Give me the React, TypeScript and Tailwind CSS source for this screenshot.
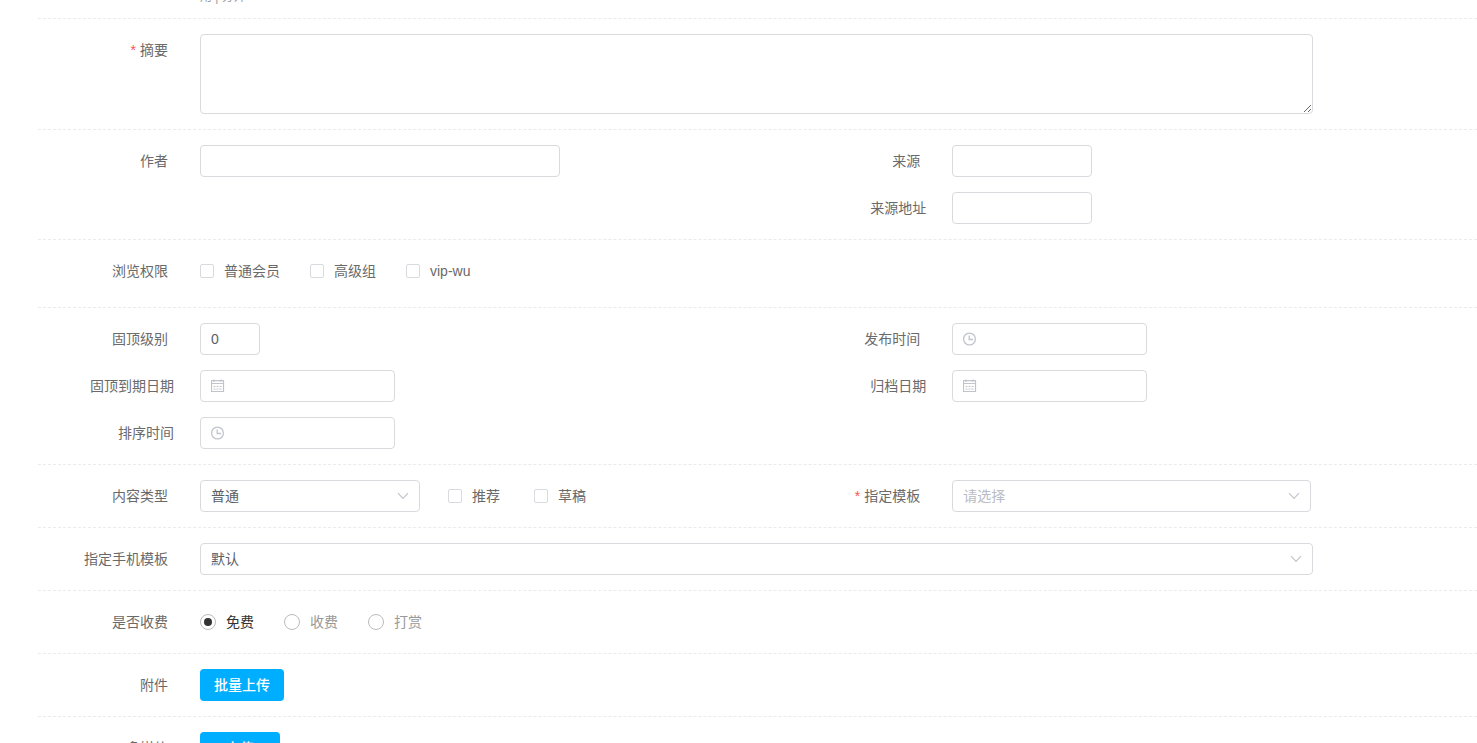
import type { ReactNode } from 'react'

const inputClass = 'block h-8 rounded border border-[#d9dadd] bg-white px-2.5 text-sm text-[#5a5e66] outline-none focus:border-[#00aeff]'

const ClockIcon = () => (
    <svg viewBox="0 0 14 14" className="size-3.5" fill="none" stroke="#c0c4cc" strokeWidth="1.3">
        <circle cx="6.5" cy="7" r="5.9" />
        <path d="M6.2 3.4v4.1h3.8" />
    </svg>
)

const CalendarIcon = () => (
    <svg viewBox="0 0 14 14" className="size-3.5" fill="none" stroke="#c0c4cc">
        <path d="M.5 1.7h12v10.8H.5zM.5 4.5h12M3 .5v2.4M10 .5v2.4" strokeWidth="1.2" />
        <path d="M2.5 7.5h8M2.5 10h8" strokeDasharray="2 1" />
    </svg>
)

const ArrowIcon = () => (
    <svg viewBox="0 0 12 8" className="pointer-events-none absolute top-3 right-[11px] h-2 w-3" fill="none" stroke="#c0c4cc" strokeWidth="1.1">
        <path d="M1 1.2 6 6.4 11 1.2" />
    </svg>
)

const Row = ({ children, className = 'pb-[15px]' }: { children: ReactNode; className?: string }) => (
    <div className={`border-b border-dashed border-[#ebebeb] pt-[15px] ${className}`}>{children}</div>
)

const Columns = ({ children }: { children: ReactNode }) => (
    <div className="grid grid-cols-[23fr_21fr] items-start">{children}</div>
)

type FieldProps = { id?: string; label: string; required?: boolean; sub?: boolean; children: ReactNode }

const Field = ({ id, label, required, sub, children }: FieldProps) => (
    <div className="flex items-start">
        <label htmlFor={id} className={`w-[162px] shrink-0 text-right leading-8 ${sub ? 'pr-[26px]' : 'pr-8'}`}>
            {required && <span className="mr-1 text-[#fa5555]">*</span>}
            {label}
        </label>
        {children}
    </div>
)

const DateInput = ({ id, icon }: { id: string; icon: ReactNode }) => (
    <div className="relative w-[195px]">
        <input id={id} type="text" className={`${inputClass} w-full pl-8`} />
        <span className="pointer-events-none absolute top-[9px] left-[11px]">{icon}</span>
    </div>
)

const Select = ({ id, value, className, placeholder }: { id: string; value: string; className: string; placeholder?: boolean }) => (
    <div className={`relative ${className}`}>
        <select id={id} className={`${inputClass} w-full appearance-none ${placeholder ? 'text-[#b8bcc4]' : ''}`}>
            <option>{value}</option>
        </select>
        <ArrowIcon />
    </div>
)

const Checkbox = ({ label }: { label: string }) => (
    <label className="flex h-8 items-center gap-2.5">
        <input type="checkbox" className="size-3.5 appearance-none rounded-xs border border-[#d9dadd] bg-white checked:bg-[#00aeff]" />
        {label}
    </label>
)

const Radio = ({ label, checked }: { label: string; checked?: boolean }) => (
    <label className="flex h-8 items-center gap-2.5 text-[#999] has-checked:text-[#333]">
        <input
            type="radio"
            name="charge"
            defaultChecked={checked}
            className="grid size-4 appearance-none place-items-center rounded-full border border-[#bbb] bg-white before:size-2 before:rounded-full checked:before:bg-[#333]"
        />
        {label}
    </label>
)

const App = () => {
    return (
        <main className="h-screen overflow-hidden bg-white pl-[38px] font-['Liberation_Sans','Noto_Sans_CJK_SC',sans-serif] text-sm text-[#6a6a6a]">
            <form className="-mt-6">
                <Row>
                    <p className="pl-[162px] text-xs leading-none text-[#999]">用 | 分开</p>
                </Row>

                <Row>
                    <Field id="summary" label="摘要" required>
                        <textarea id="summary" className="mr-41 block h-20 min-w-0 flex-1 resize-y rounded border border-[#d9dadd] px-2.5 py-1.5 outline-none" />
                    </Field>
                </Row>

                <Row>
                    <Columns>
                        <Field id="author" label="作者">
                            <input id="author" type="text" className={`${inputClass} w-[360px]`} />
                        </Field>
                        <div className="flex flex-col gap-[15px]">
                            <Field id="source" label="来源">
                                <input id="source" type="text" className={`${inputClass} w-[140px]`} />
                            </Field>
                            <Field id="source-url" label="来源地址" sub>
                                <input id="source-url" type="text" className={`${inputClass} w-[140px]`} />
                            </Field>
                        </div>
                    </Columns>
                </Row>

                <Row className="pb-5">
                    <Field label="浏览权限">
                        <div className="flex gap-[30px]">
                            <Checkbox label="普通会员" />
                            <Checkbox label="高级组" />
                            <Checkbox label="vip-wu" />
                        </div>
                    </Field>
                </Row>

                <Row>
                    <Columns>
                        <div className="flex flex-col gap-[15px]">
                            <Field id="top-level" label="固顶级别">
                                <input id="top-level" type="text" defaultValue="0" className={`${inputClass} w-[60px]`} />
                            </Field>
                            <Field id="top-expire" label="固顶到期日期" sub>
                                <DateInput id="top-expire" icon={<CalendarIcon />} />
                            </Field>
                            <Field id="sort-time" label="排序时间" sub>
                                <DateInput id="sort-time" icon={<ClockIcon />} />
                            </Field>
                        </div>
                        <div className="flex flex-col gap-[15px]">
                            <Field id="publish-time" label="发布时间">
                                <DateInput id="publish-time" icon={<ClockIcon />} />
                            </Field>
                            <Field id="archive-date" label="归档日期" sub>
                                <DateInput id="archive-date" icon={<CalendarIcon />} />
                            </Field>
                        </div>
                    </Columns>
                </Row>

                <Row>
                    <Columns>
                        <Field id="content-type" label="内容类型">
                            <Select id="content-type" value="普通" className="w-[220px]" />
                            <div className="ml-7 flex gap-[34px]">
                                <Checkbox label="推荐" />
                                <Checkbox label="草稿" />
                            </div>
                        </Field>
                        <Field id="template" label="指定模板" required>
                            <Select id="template" value="请选择" className="w-[359px]" placeholder />
                        </Field>
                    </Columns>
                </Row>

                <Row>
                    <Field id="mobile-template" label="指定手机模板">
                        <Select id="mobile-template" value="默认" className="mr-41 flex-1" />
                    </Field>
                </Row>

                <Row>
                    <Field label="是否收费">
                        <div className="flex gap-[30px]">
                            <Radio label="免费" checked />
                            <Radio label="收费" />
                            <Radio label="打赏" />
                        </div>
                    </Field>
                </Row>

                <Row>
                    <Field id="attachment" label="附件">
                        <button id="attachment" type="button" className="h-8 rounded bg-[#00aeff] px-3.5 font-medium text-white">批量上传</button>
                    </Field>
                </Row>

                <Row>
                    <Field id="media" label="多媒体">
                        <button id="media" type="button" className="h-8 w-20 rounded bg-[#00aeff] font-medium text-white">上传</button>
                    </Field>
                </Row>
            </form>
        </main>
    )
}

export default App
